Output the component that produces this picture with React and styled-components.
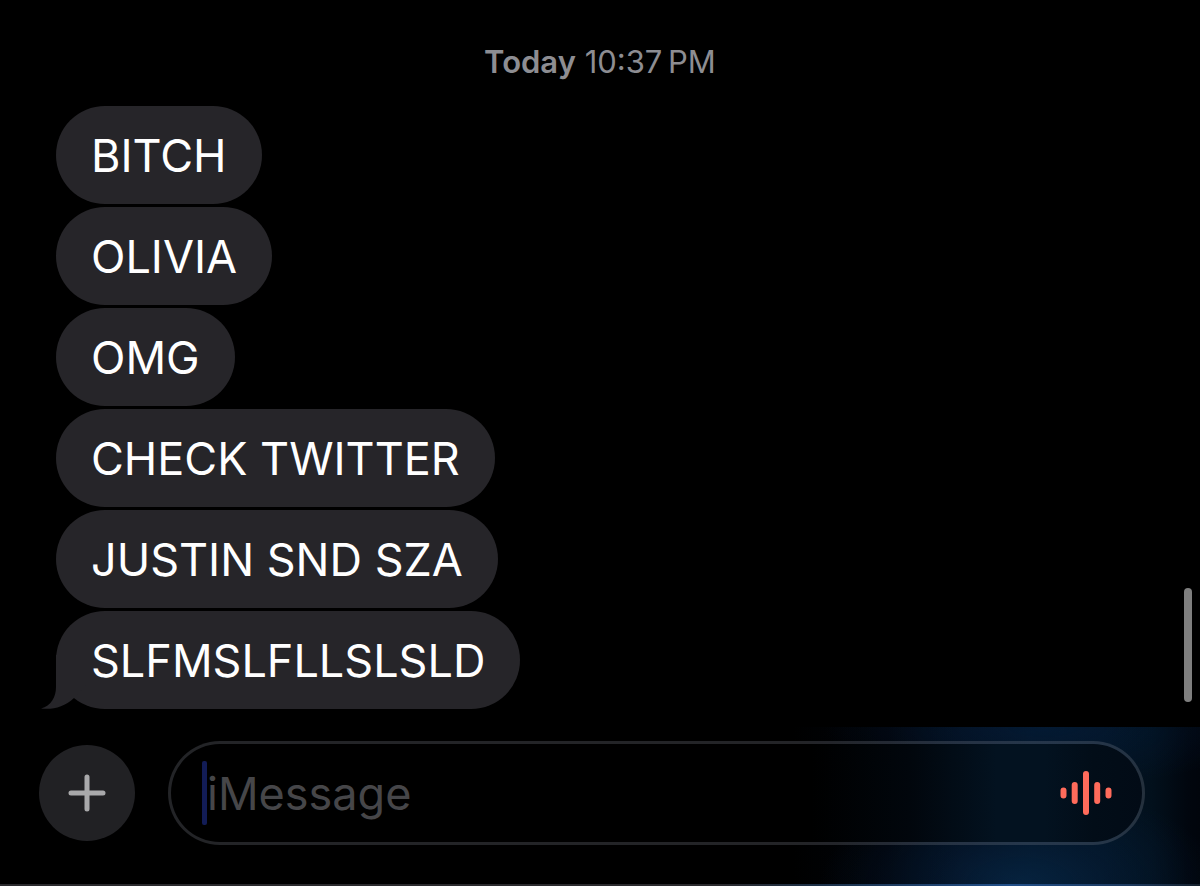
import React from 'react'
import styled, { createGlobalStyle } from 'styled-components';

const GlobalStyle = createGlobalStyle`
* {
  box-sizing: border-box;
}
body {
  margin: 0;
  background: #000;
  font-family: Inter, "Liberation Sans", sans-serif;
}
`;

const Screen = styled.main`
position: relative;
display: flex;
flex-direction: column;
min-height: 100vh;
background: #000;
`;

const Thread = styled.section`
flex: 1;
display: flex;
flex-direction: column;
padding: 44px 56px 18px;
`;

const Timestamp = styled.p`
margin: 0 0 26px;
font-size: 31px;
line-height: 36px;
text-align: center;
color: #8d8d92;
`;

const Day = styled.span`
font-weight: 600;
`;

const Messages = styled.ul`
display: flex;
flex-direction: column;
align-items: flex-start;
gap: 3px;
margin: 0;
padding: 0;
list-style: none;
`;

const Bubble = styled.li`
position: relative;
padding: 20px 35px 18px;
border-radius: 49px;
background: #262529;
color: #fff;
font-size: 45px;
line-height: 60px;
`;

const Tail = styled.svg`
position: absolute;
left: -15px;
bottom: 0;
fill: #262529;
`;

const ScrollThumb = styled.div`
position: absolute;
right: 8px;
bottom: 184px;
width: 8px;
height: 114px;
border-radius: 4px;
background: #7f7f7f;
`;

const Composer = styled.form`
display: flex;
align-items: center;
gap: 33px;
padding: 14px 55px 39px 39px;
border-bottom: 2px solid;
border-image: linear-gradient(90deg, #2a292d 60%, #1c3047 68%, #22508a 84%, #1d3a5f 94%, #15202c) 1;
background:
  radial-gradient(ellipse 200px 100px at 85% 100%, rgba(8, 42, 76, 0.65), rgba(6, 32, 62, 0.4) 45%, transparent),
  radial-gradient(ellipse 220px 60px at 87% 0%, rgba(4, 28, 58, 0.6), transparent),
  linear-gradient(90deg, #000 66%, #01040a 74%, #030e1c 80%, #031526 86%, #031424 92%, #02101c 96%, #01060e 99%, #01050c);
`;

const AddButton = styled.button`
display: flex;
align-items: center;
justify-content: center;
flex: none;
width: 96px;
height: 96px;
padding: 0;
border: 0;
border-radius: 50%;
background: #212124;
color: #a9a9ab;
`;

const Field = styled.div`
flex: 1;
display: flex;
align-items: center;
height: 104px;
min-width: 0;
padding: 0 30px 0 31px;
border: 3px solid rgba(140, 145, 155, 0.25);
border-radius: 52px;
background: linear-gradient(90deg, #000 66%, #01060c 76%, #031220 85%, #031220 90%, #020d18 95%, #020b16);
background-clip: padding-box;
`;

const Caret = styled.span`
flex: none;
width: 5px;
height: 64px;
border-radius: 2px;
background: #121c56;
`;

const TextInput = styled.input`
flex: 1;
min-width: 0;
height: 60px;
padding: 0;
border: 0;
outline: none;
background: transparent;
color: #fff;
font-family: inherit;
font-size: 45px;
&::placeholder {
  color: #464649;
  opacity: 1;
}
`;

const VoiceButton = styled.button`
display: flex;
flex: none;
padding: 0;
border: 0;
background: transparent;
color: #ff6b5b;
`;

const messages = [
  'BITCH',
  'OLIVIA',
  'OMG',
  'CHECK TWITTER',
  'JUSTIN SND SZA',
  'SLFMSLFLLSLSLD',
];

const App = () => {
  return (
    <>
      <GlobalStyle />
      <Screen>
        <Thread>
          <Timestamp><Day>Today</Day> 10:37{'\u2009'}PM</Timestamp>
          <Messages>
            {
              messages.map((text, index) => (
                <Bubble key={text}>
                  {index === messages.length - 1 && (
                    <Tail width="46" height="54" viewBox="0 0 46 54" aria-hidden="true">
                      <path d="M15 0V32C15 42 10 51 0 53.5C12 55 23 52 33 43L45 30V0Z" />
                    </Tail>
                  )}
                  {text}
                </Bubble>
              ))
            }
          </Messages>
        </Thread>
        <ScrollThumb />
        <Composer onSubmit={(e) => e.preventDefault()}>
          <AddButton type="button" aria-label="Add">
            <svg width="38" height="38" viewBox="0 0 38 38" fill="none" stroke="currentColor" strokeWidth="5" strokeLinecap="round">
              <path d="M19 3V35M3 19H35" />
            </svg>
          </AddButton>
          <Field>
            <Caret />
            <TextInput type="text" placeholder="iMessage" aria-label="iMessage" />
            <VoiceButton type="button" aria-label="Record audio">
              <svg width="52" height="46" viewBox="0 0 52 46" fill="none" stroke="currentColor" strokeWidth="6" strokeLinecap="round">
                <path d="M3.5 20.5V25.5M14.7 15V31M26 4V42M37.2 15V31M48.5 20.5V25.5" />
              </svg>
            </VoiceButton>
          </Field>
        </Composer>
      </Screen>
    </>
  )
}

export default App
